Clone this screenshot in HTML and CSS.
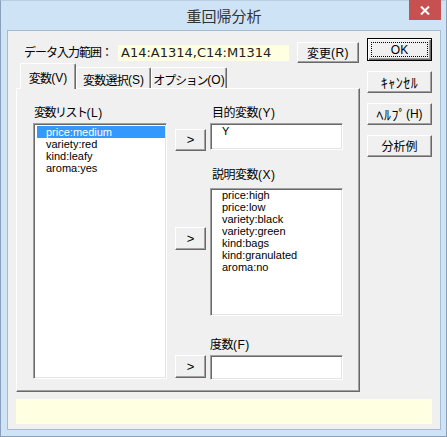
FILE: index.html
```html
<!DOCTYPE html>
<html lang="ja">
<head>
<meta charset="utf-8">
<title>重回帰分析</title>
<link rel="stylesheet" href="styles.css">
</head>
<body>
<div class="window">
  <div class="titlebar">
    <span class="title">重回帰分析</span>
    <div class="close">
      <svg width="10" height="9" viewBox="0 0 10 9"><path d="M1 0.5 L9 8.5 M9 0.5 L1 8.5" stroke="#fff" stroke-width="2" fill="none"/></svg>
    </div>
  </div>
  <div class="client">
    <div class="upper">
      <div class="left">
        <div class="toprow">
          <span class="range-label">データ入力範囲：</span>
          <span class="range-field">A14:A1314,C14:M1314</span>
          <div class="btn btn-change">変更<span class="key">(R)</span></div>
        </div>
        <div class="tabs">
          <div class="tab tab-sel">変数<span class="key">(V)</span></div>
          <div class="tab tab-2">変数選択<span class="key">(S)</span></div>
          <div class="tab tab-3">オプション<span class="key">(O)</span></div>
        </div>
        <div class="pane">
          <div class="lbl lbl-list">変数リスト<span class="key">(L)</span></div>
          <div class="sunken listbox">
            <div class="item item-sel">price:medium</div>
            <div class="item">variety:red</div>
            <div class="item">kind:leafy</div>
            <div class="item">aroma:yes</div>
          </div>
          <div class="btn arrow arrow-1">&gt;</div>
          <div class="btn arrow arrow-2">&gt;</div>
          <div class="btn arrow arrow-3">&gt;</div>
          <div class="lbl lbl-y">目的変数<span class="key">(Y)</span></div>
          <div class="sunken box-y"><div class="item">Y</div></div>
          <div class="lbl lbl-x">説明変数<span class="key">(X)</span></div>
          <div class="sunken box-x">
            <div class="item">price:high</div>
            <div class="item">price:low</div>
            <div class="item">variety:black</div>
            <div class="item">variety:green</div>
            <div class="item">kind:bags</div>
            <div class="item">kind:granulated</div>
            <div class="item">aroma:no</div>
          </div>
          <div class="lbl lbl-f">度数<span class="key">(F)</span></div>
          <div class="sunken box-f"></div>
        </div>
      </div>
      <div class="right">
        <div class="btn btn-default"><span class="focus">OK</span></div>
        <div class="btn side half">ｷｬﾝｾﾙ</div>
        <div class="btn side half">ﾍﾙﾌﾟ<span class="key-s">(H)</span></div>
        <div class="btn side">分析例</div>
      </div>
    </div>
    <div class="status"></div>
  </div>
</div>
</body>
</html>
```
FILE: styles.css
```css
* { box-sizing: border-box; }
body { margin: 0; background: #fff; }

.window {
  width: 447px;
  height: 437px;
  border: 1px solid #8aa0ba;
  border-top-color: #b9cde3;
  background: #cfe3f7;
  padding: 0 5px 6px 6px;
  display: flex;
  flex-direction: column;
  font-family: "MS UI Gothic", "Noto Sans CJK JP", sans-serif;
  color: #000;
  white-space: nowrap;
}

.titlebar {
  height: 29px;
  position: relative;
  display: flex;
  align-items: center;
  justify-content: center;
  flex: none;
}
.title {
  font-size: 15px;
  line-height: 29px;
  color: #333;
}
.close {
  position: absolute;
  top: -1px;
  right: 0;
  width: 32px;
  height: 20px;
  background: #c75050;
  display: flex;
  align-items: center;
  justify-content: center;
}

.client {
  flex: 1;
  border: 1px solid #a6bad0;
  background: #f0f0f0;
  display: flex;
  flex-direction: column;
  padding: 7px 8px 5px 8px;
}

.upper {
  display: flex;
  gap: 7px;
  height: 354px;
  flex: none;
}
.left {
  width: 344px;
  display: flex;
  flex-direction: column;
}
.right {
  width: 65px;
  display: flex;
  flex-direction: column;
  gap: 10px;
}

.toprow {
  height: 25px;
  display: flex;
  align-items: center;
  padding-left: 8px;
  flex: none;
}
.range-label {
  width: 94px;
  font-size: 12px;
  line-height: 14px;
  letter-spacing: -1px;
  margin-top: 2px;
}
.range-field {
  width: 171px;
  height: 16px;
  margin-top: 4px;
  background: #ffffe1;
  font-family: "DejaVu Sans", sans-serif;
  font-size: 13px;
  line-height: 16px;
  padding-left: 3px;
  color: #222;
}

.key { letter-spacing: 0.5px; font-family: "Liberation Sans", sans-serif; }
.key-s { letter-spacing: 0; font-size: 12px; font-family: "Liberation Sans", sans-serif; }

.btn {
  background: #f0f0f0;
  border: 1px solid;
  border-color: #fff #696969 #696969 #fff;
  box-shadow: inset -1px -1px #a0a0a0;
  font-size: 12px;
  display: flex;
  align-items: center;
  justify-content: center;
  line-height: 14px;
}
.btn-change {
  width: 62px;
  height: 21px;
  margin-left: 8px;
  margin-top: 4px;
}

.btn-default {
  height: 23px;
  border: 1px solid #000;
  box-shadow: inset 1px 1px #fff, inset -1px -1px #696969, inset -2px -2px #a0a0a0;
  padding: 3px;
}
.focus {
  flex: 1;
  align-self: stretch;
  border: 1px dotted #000;
  display: flex;
  align-items: center;
  justify-content: center;
  font-family: "Liberation Sans", sans-serif;
  font-size: 12px;
}
.side { height: 22px; }
.half { font-size: 14px; letter-spacing: 0.5px; }

.tabs {
  height: 25px;
  display: flex;
  align-items: flex-end;
  padding-left: 4px;
  flex: none;
}
.tab {
  height: 21px;
  border: 1px solid;
  border-color: #fff #696969 transparent #fff;
  border-bottom: none;
  box-shadow: inset -1px 0 #a0a0a0;
  border-radius: 2px 2px 0 0;
  font-size: 12px;
  line-height: 14px;
  letter-spacing: -0.8px;
  display: flex;
  align-items: center;
  justify-content: center;
  padding-top: 4px;
  background: #f0f0f0;
}
.tab .key { letter-spacing: 0; }
.tab-sel {
  width: 56px;
  height: 26px;
  margin-bottom: -1px;
  position: relative;
  z-index: 1;
  padding-top: 2px;
}
.tab-2 { width: 75px; }
.tab-3 { width: 76px; letter-spacing: -1.2px; }

.pane {
  height: 304px;
  border: 1px solid;
  border-color: #fff #696969 #696969 #fff;
  box-shadow: inset -1px -1px #a0a0a0;
  padding: 16px 0 0 16px;
  display: grid;
  grid-template-columns: 134px 8px 31px 4px 133px;
  grid-template-rows: 18px 27px 38px 128px 39px 25px;
  flex: none;
}

.lbl {
  font-size: 12px;
  line-height: 14px;
  padding-left: 1px;
  letter-spacing: -0.5px;
}
.lbl-list { grid-column: 1; grid-row: 1; letter-spacing: -1.5px; }
.lbl-y { grid-column: 5; grid-row: 1; padding-left: 2px; }
.lbl-x { grid-column: 5; grid-row: 3; align-self: end; margin-bottom: 6px; padding-left: 2px; }
.lbl-f { grid-column: 5; grid-row: 5; align-self: end; margin-bottom: 3px; padding-left: 0; }

.sunken {
  background: #fff;
  border: 1px solid;
  border-color: #a0a0a0 #fff #fff #a0a0a0;
  box-shadow: inset 1px 1px #696969, inset -1px -1px #e3e3e3;
}
.listbox {
  grid-column: 1;
  grid-row: 2 / 7;
  height: 256px;
  align-self: start;
  padding: 2px 1px 0 3px;
}
.box-y { grid-column: 5; grid-row: 2; padding: 1px 0 0 2px; }
.box-x { grid-column: 5; grid-row: 4; padding: 0 0 0 2px; }
.box-f { grid-column: 5; grid-row: 6; }

.item {
  height: 12px;
  line-height: 12px;
  font-family: "Liberation Sans", sans-serif;
  font-size: 11px;
  padding-left: 9px;
  white-space: nowrap;
}
.item-sel {
  background: #3399ff;
  color: #fff;
}

.arrow { width: 31px; font-family: "Liberation Sans", sans-serif; font-size: 13px; }
.arrow-1 { grid-column: 3; grid-row: 2; align-self: end; height: 22px; margin-bottom: -1px; }
.arrow-2 { grid-column: 3; grid-row: 4; align-self: start; height: 23px; margin-top: 39px; }
.arrow-3 { grid-column: 3; grid-row: 6; align-self: start; height: 23px; }

.status {
  margin-top: 7px;
  height: 25px;
  background: #ffffe1;
  flex: none;
}
```
